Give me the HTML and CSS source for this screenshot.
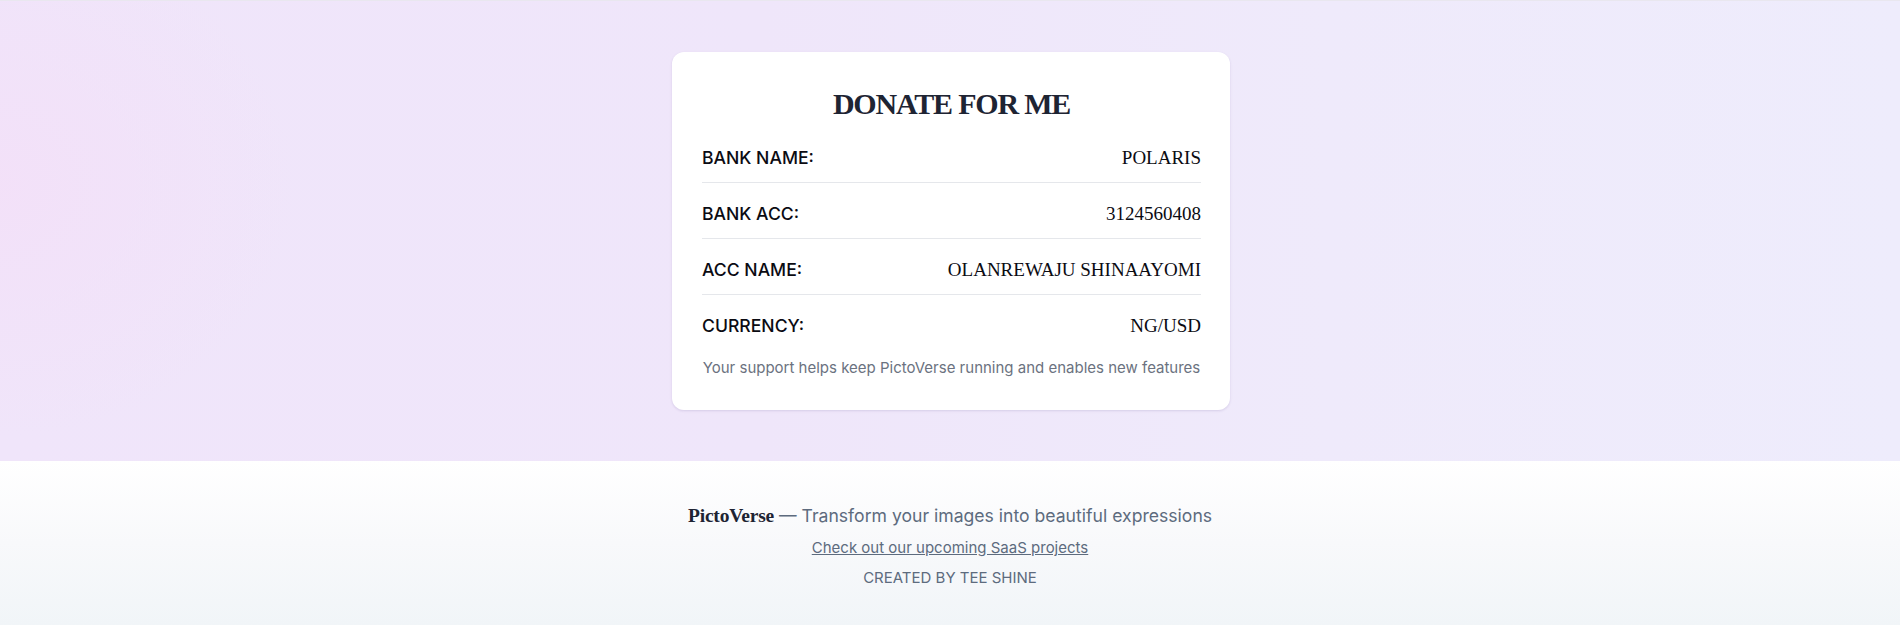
FILE: index.html
```html
<!DOCTYPE html>
<html lang="en">
<head>
<meta charset="utf-8">
<title>Donate - PictoVerse</title>
<link rel="stylesheet" href="styles.css">
</head>
<body>
<main class="hero">
  <section class="card">
    <h1 class="card-title">DONATE FOR ME</h1>
    <div class="rows">
      <div class="row"><span class="label">BANK NAME:</span><span class="value">POLARIS</span></div>
      <div class="row"><span class="label">BANK ACC:</span><span class="value">3124560408</span></div>
      <div class="row"><span class="label">ACC NAME:</span><span class="value">OLANREWAJU SHINAAYOMI</span></div>
      <div class="row"><span class="label">CURRENCY:</span><span class="value">NG/USD</span></div>
    </div>
    <p class="note">Your support helps keep PictoVerse running and enables new features</p>
  </section>
</main>
<footer class="footer">
  <p class="tagline"><span class="brand">PictoVerse</span> — Transform your images into beautiful expressions</p>
  <p class="link-line"><a class="link" href="#">Check out our upcoming SaaS projects</a></p>
  <p class="credit">CREATED BY TEE SHINE</p>
</footer>
</body>
</html>
```

FILE: styles.css
```css
* { box-sizing: border-box; }
html, body { margin: 0; padding: 0; }
body {
  font-family: "Inter", "Liberation Sans", sans-serif;
  background: #f1f5f9;
}
.hero {
  height: 461px;
  display: flex;
  align-items: center;
  justify-content: center;
  border-top: 1px solid #e9e7ef;
  background:
    radial-gradient(ellipse 420px 360px at 0% 40%, rgba(243, 224, 248, 0.9), rgba(243, 224, 248, 0) 70%),
    linear-gradient(90deg, #f0e5fa 0%, #efe6fa 40%, #efeafb 70%, #eeecfc 100%);
}
.card {
  width: 558px;
  margin-left: 2px;
  background: #ffffff;
  border-radius: 12px;
  padding: 32px 29px 31px 30px;
  box-shadow: 0 1px 3px rgba(90, 70, 140, 0.10), 0 1px 2px rgba(90, 70, 140, 0.06);
}
.card-title {
  margin: 0;
  text-align: center;
  font-family: "Liberation Serif", "DejaVu Serif", serif;
  font-weight: 700;
  font-size: 30px;
  line-height: 39px;
  letter-spacing: -0.04em;
  color: #1e2433;
}
.rows {
  margin-top: 11px;
  display: flex;
  flex-direction: column;
  gap: 7px;
}
.row {
  display: flex;
  justify-content: space-between;
  align-items: center;
  padding: 10px 0;
  line-height: 28px;
  border-bottom: 1px solid #e5e7eb;
}
.row:last-child { border-bottom: none; }
.label {
  font-size: 17.6px;
  font-weight: 500;
  color: #0b0b12;
}
.value {
  font-family: "Liberation Serif", "DejaVu Serif", serif;
  font-size: 19px;
  font-variant-numeric: oldstyle-nums;
  color: #0b0b12;
}
.note {
  margin: 7px 0 0;
  text-align: center;
  font-size: 15px;
  line-height: 22px;
  color: #6b7280;
}
.footer {
  height: 164px;
  padding-top: 41px;
  text-align: center;
  background: linear-gradient(180deg, #ffffff 0%, #f8f9fb 50%, #f1f5f8 100%);
}
.footer p { margin: 0; }
.tagline {
  font-size: 17.6px;
  line-height: 28px;
  color: #5d6b7e;
}
.brand {
  font-family: "Liberation Serif", "DejaVu Serif", serif;
  font-size: 19.5px;
  font-weight: 700;
  color: #1e2433;
  letter-spacing: -0.01em;
}
.link-line {
  margin-top: 6px !important;
  font-size: 15px;
  line-height: 24px;
}
.link {
  color: #5d6b7e;
  text-decoration: underline;
}
.credit {
  margin-top: 6px !important;
  font-size: 15px;
  line-height: 24px;
  color: #5d6b7e;
}
```
